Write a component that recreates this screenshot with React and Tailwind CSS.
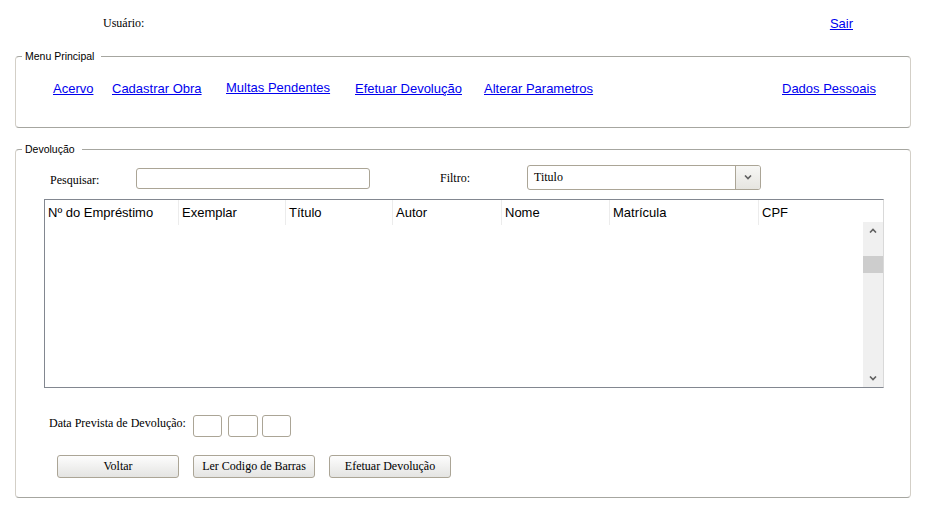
import React from 'react';

const serif = "font-['Liberation_Serif',serif] text-[12px] leading-[15px] text-black";
const sans = "font-['Liberation_Sans',Arial,sans-serif]";
const linkCls = `${sans} text-[13px] leading-[15px] text-[#0000ee] underline`;

function Chevron({ up, className }) {
  return (
    <svg width="8" height="5" viewBox="0 0 8 5" className={className}>
      <polyline
        points={up ? '1,4.5 4,1.5 7,4.5' : '1,0.5 4,3.5 7,0.5'}
        fill="none"
        stroke="#606060"
        strokeWidth="1.6"
      />
    </svg>
  );
}

function Box({ className }) {
  return <div className={`border border-[#aba596] rounded-[3px] bg-white ${className}`} />;
}

function Button({ children }) {
  return (
    <div className={`w-[122px] h-[23px] flex items-center justify-center border border-[#aba596] rounded-[3px] bg-gradient-to-b from-[#fdfdfd] to-[#e4e4e2] ${serif}`}>
      {children}
    </div>
  );
}

function Group({ title, children, className }) {
  return (
    <fieldset className={`ml-[15px] w-[896px] border border-[#a6a6a0] border-x-[#d3cfc7] rounded-[4px] ${className}`}>
      <legend className={`ml-[6px] pl-[3px] pr-[7px] ${sans} text-[10.5px] leading-[14px] text-black`}>{title}</legend>
      {children}
    </fieldset>
  );
}

const columns = [
  ['Nº do Empréstimo', 'w-[134px]'],
  ['Exemplar', 'w-[107px]'],
  ['Título', 'w-[107px]'],
  ['Autor', 'w-[109px]'],
  ['Nome', 'w-[108px]'],
  ['Matrícula', 'w-[149px]'],
  ['CPF', 'flex-1'],
];

export default function App() {
  return (
    <div className="w-[925px] h-[512px] bg-white overflow-hidden">
      <div className="h-[46px] flex items-center">
        <span className={`ml-[103px] ${serif}`}>Usuário:</span>
        <a className={`ml-auto mr-[72px] ${linkCls}`}>Sair</a>
      </div>

      <Group title="Menu Principal" className="mt-[3px]">
        <div className="h-[64px] pt-[12px] flex items-start">
          <div className="ml-[37px] w-[59px]"><a className={linkCls}>Acervo</a></div>
          <div className="w-[114px]"><a className={linkCls}>Cadastrar Obra</a></div>
          <div className="w-[129px] -mt-[1px]"><a className={linkCls}>Multas Pendentes</a></div>
          <div className="w-[129px]"><a className={linkCls}>Efetuar Devolução</a></div>
          <div className="w-[298px]"><a className={linkCls}>Alterar Parametros</a></div>
          <div><a className={linkCls}>Dados Pessoais</a></div>
        </div>
      </Group>

      <Group title="Devolução" className="mt-[14px]">
        <div className="h-[341px] pt-[9px]">
          <div className="flex items-start">
            <div className={`ml-[34px] w-[86px] mt-[8px] ${serif}`}>Pesquisar:</div>
            <Box className="w-[234px] h-[21px] mt-[3px]" />
            <div className={`ml-[70px] w-[87px] mt-[6px] ${serif}`}>Filtro:</div>
            <div className="w-[234px] h-[25px] flex border border-[#aba596] rounded-[3px] bg-white overflow-hidden">
              <div className={`flex-1 pl-[6px] pt-[4px] ${serif}`}>Titulo</div>
              <div className="w-[25px] flex items-center justify-center border-l border-[#aba596] bg-gradient-to-b from-[#f7f7f5] to-[#e6e5e0]">
                <Chevron />
              </div>
            </div>
          </div>

          <div className="ml-[28px] mt-[9px] w-[840px] h-[189px] flex flex-col border border-[#828790] border-r-[#d9d9d9] bg-white">
            <div className="h-[22px] flex">
              {columns.map(([name, w]) => (
                <div key={name} className={`${w} h-[25px] pl-[3px] pt-[5px] border-r border-[#ececec] last:border-r-0 ${sans} text-[13px] leading-[15px] text-black whitespace-nowrap`}>
                  {name}
                </div>
              ))}
            </div>
            <div className="flex-1 flex">
              <div className="flex-1" />
              <div className="w-[20px] flex flex-col bg-[#f0f0f0]">
                <div className="h-[17px] flex items-center justify-center">
                  <Chevron up />
                </div>
                <div className="mt-[17px] h-[17px] bg-[#cdcdcd]" />
                <div className="flex-1" />
                <div className="h-[17px] flex items-center justify-center">
                  <Chevron />
                </div>
              </div>
            </div>
          </div>

          <div className="mt-[27px] flex items-start">
            <div className={`ml-[33px] w-[144px] mt-[1px] ${serif}`}>Data Prevista de Devolução:</div>
            <Box className="w-[29px] h-[22px]" />
            <Box className="ml-[6px] w-[30px] h-[22px]" />
            <Box className="ml-[4px] w-[29px] h-[22px]" />
          </div>

          <div className="mt-[18px] ml-[41px] flex gap-[14px]">
            <Button>Voltar</Button>
            <Button>Ler Codigo de Barras</Button>
            <Button>Efetuar Devolução</Button>
          </div>
        </div>
      </Group>
    </div>
  );
}
